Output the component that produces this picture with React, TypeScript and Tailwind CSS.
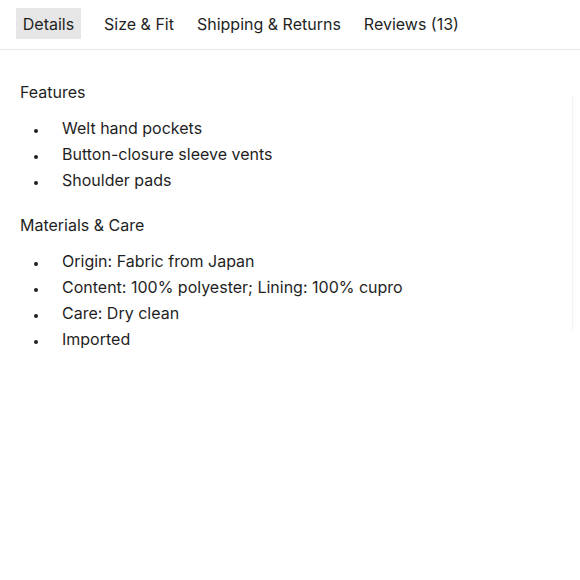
export default function App() {
  const tabs = ["Details", "Size & Fit", "Shipping & Returns", "Reviews (13)"];
  const sections = [
    { title: "Features", items: ["Welt hand pockets", "Button-closure sleeve vents", "Shoulder pads"] },
    {
      title: "Materials & Care",
      items: [
        "Origin: Fabric from Japan",
        "Content: 100% polyester; Lining: 100% cupro",
        "Care: Dry clean",
        "Imported",
      ],
    },
  ];

  return (
    <div className="w-[580px] h-[580px] bg-white text-[#1f1f1f] font-['Inter',sans-serif] overflow-hidden">
      <div className="flex items-start gap-[23px] h-[50px] pt-2 px-4 border-b border-[#e8e8e8]">
        {tabs.map((t, i) => (
          <div
            key={t}
            className={`h-[31px] flex items-center justify-center text-[16px] ${
              i === 0 ? "w-[65px] bg-[#e6e6e6]" : ""
            }`}
          >
            {t}
          </div>
        ))}
      </div>

      <div className="flex">
        <div className="flex-1 px-5 pt-[29px]">
          {sections.map((s) => (
            <section key={s.title} className="mb-[19px]">
              <h3 className="text-[16px] leading-[26px] mb-[10px]">{s.title}</h3>
              <ul>
                {s.items.map((it) => (
                  <li key={it} className="flex items-center text-[16px] leading-[26px]">
                    <span className="w-[42px] pl-[14px] pt-[5px] flex">
                      <span className="w-[4px] h-[4px] rounded-full bg-[#1f1f1f]" />
                    </span>
                    <span>{it}</span>
                  </li>
                ))}
              </ul>
            </section>
          ))}
        </div>
        <div className="w-[8px] pt-[46px]">
          <div className="w-px h-[234px] bg-[#f2f2f2]" />
        </div>
      </div>
    </div>
  );
}
